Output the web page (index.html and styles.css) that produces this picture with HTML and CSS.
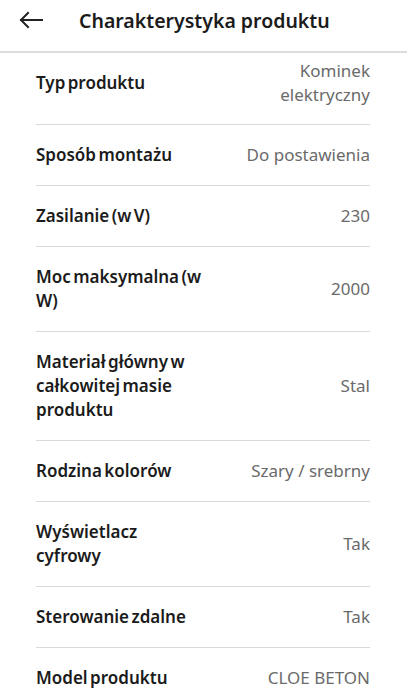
FILE: index.html
```html
<!DOCTYPE html>
<html lang="pl">
<head>
  <meta charset="UTF-8">
  <meta name="viewport" content="width=device-width, initial-scale=1.0">
  <title>Charakterystyka produktu</title>
  <link rel="stylesheet" href="styles.css">
</head>
<body>
  <header class="top_bar">
    <button class="back_btn" aria-label="Wstecz">
      <svg width="24" height="24" viewBox="0 0 24 24" fill="none" stroke="#222" stroke-width="2" stroke-linecap="square">
        <path d="M2 12H23"/>
        <path d="M9 5L2 12L9 19"/>
      </svg>
    </button>
    <h1>Charakterystyka produktu</h1>
  </header>

  <div class="spec_list">
    <div class="spec_row first">
      <div class="spec_label">Typ produktu</div>
      <div class="spec_value">Kominek elektryczny</div>
    </div>
    <div class="spec_row">
      <div class="spec_label">Sposób montażu</div>
      <div class="spec_value">Do postawienia</div>
    </div>
    <div class="spec_row">
      <div class="spec_label">Zasilanie (w V)</div>
      <div class="spec_value">230</div>
    </div>
    <div class="spec_row">
      <div class="spec_label">Moc maksymalna (w W)</div>
      <div class="spec_value">2000</div>
    </div>
    <div class="spec_row">
      <div class="spec_label">Materiał główny w całkowitej masie produktu</div>
      <div class="spec_value">Stal</div>
    </div>
    <div class="spec_row">
      <div class="spec_label">Rodzina kolorów</div>
      <div class="spec_value">Szary / srebrny</div>
    </div>
    <div class="spec_row">
      <div class="spec_label">Wyświetlacz cyfrowy</div>
      <div class="spec_value">Tak</div>
    </div>
    <div class="spec_row">
      <div class="spec_label">Sterowanie zdalne</div>
      <div class="spec_value">Tak</div>
    </div>
    <div class="spec_row">
      <div class="spec_label">Model produktu</div>
      <div class="spec_value">CLOE BETON</div>
    </div>
  </div>
</body>
</html>
```

FILE: styles.css
```css
body {
  margin: 0;
  background-color: white;
  font-family: "Noto Sans", "Open Sans", sans-serif;
  color: #1b1b1b;
  overflow: hidden;
}
.top_bar {
  height: 40px;
  padding-bottom: 11px;
  display: flex;
  align-items: center;
  border-bottom: 2px solid #dcdcdc;
}
.back_btn {
  background: none;
  border: none;
  padding: 0;
  margin-left: 19px;
  width: 24px;
  height: 24px;
  display: flex;
}
.top_bar h1 {
  margin: 0 0 0 36px;
  font-size: 19.5px;
  font-weight: 600;
}
.spec_list {
  margin: 0 37px 0 36px;
}
.spec_row {
  display: flex;
  align-items: center;
  justify-content: space-between;
  padding: 18px 0;
  border-bottom: 1px solid #d9d9d9;
  line-height: 24px;
}
.spec_row.first {
  padding-top: 6px;
  padding-bottom: 17px;
}
.spec_label {
  flex: 0 0 167px;
  font-size: 17px;
  font-weight: 600;
  word-spacing: -2px;
}
.spec_value {
  flex: 1;
  text-align: right;
  font-size: 17px;
  color: #6a6a6a;
  padding-left: 12px;
}
.spec_row.first .spec_value {
  padding-left: 60px;
}
```
